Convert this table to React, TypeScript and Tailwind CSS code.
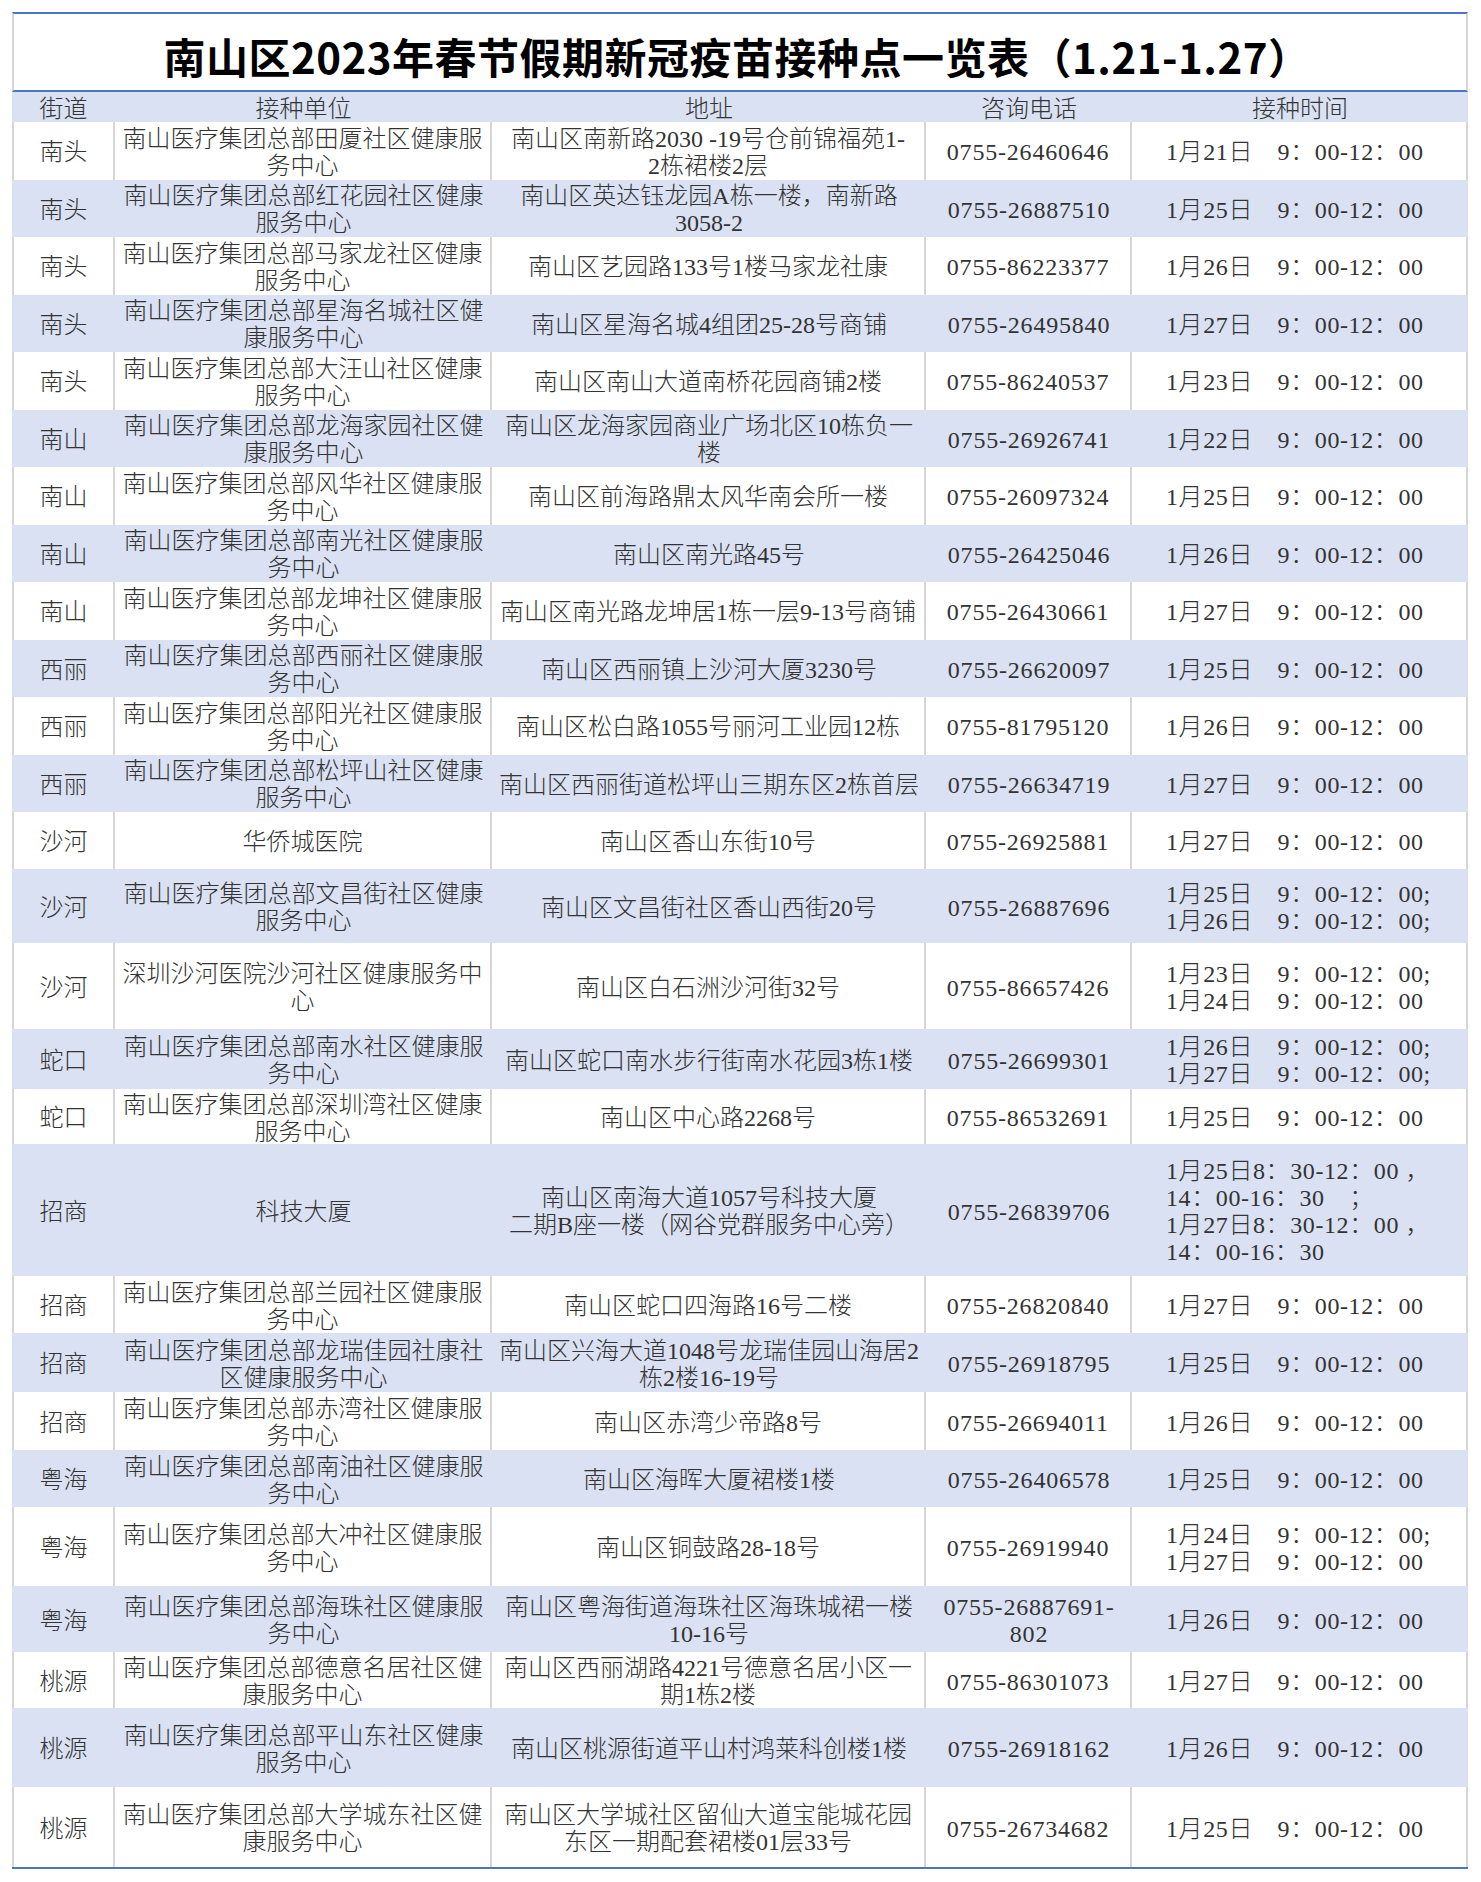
import React from "react";

type Row = {
  street: string;
  unit: string[];
  address: string[];
  phone: string[];
  time: string[];
  h: string;
};

const T = "　9：00-12：00";

const rows: Row[] = [
  { street: "南头", unit: ["南山医疗集团总部田厦社区健康服", "务中心"], address: ["南山区南新路2030 -19号仓前锦福苑1-", "2栋裙楼2层"], phone: ["0755-26460646"], time: ["1月21日" + T], h: "h-[57.5px]" },
  { street: "南头", unit: ["南山医疗集团总部红花园社区健康", "服务中心"], address: ["南山区英达钰龙园A栋一楼，南新路", "3058-2"], phone: ["0755-26887510"], time: ["1月25日" + T], h: "h-[57.5px]" },
  { street: "南头", unit: ["南山医疗集团总部马家龙社区健康", "服务中心"], address: ["南山区艺园路133号1楼马家龙社康"], phone: ["0755-86223377"], time: ["1月26日" + T], h: "h-[57.5px]" },
  { street: "南头", unit: ["南山医疗集团总部星海名城社区健", "康服务中心"], address: ["南山区星海名城4组团25-28号商铺"], phone: ["0755-26495840"], time: ["1月27日" + T], h: "h-[57.5px]" },
  { street: "南头", unit: ["南山医疗集团总部大汪山社区健康", "服务中心"], address: ["南山区南山大道南桥花园商铺2楼"], phone: ["0755-86240537"], time: ["1月23日" + T], h: "h-[57.5px]" },
  { street: "南山", unit: ["南山医疗集团总部龙海家园社区健", "康服务中心"], address: ["南山区龙海家园商业广场北区10栋负一", "楼"], phone: ["0755-26926741"], time: ["1月22日" + T], h: "h-[57.5px]" },
  { street: "南山", unit: ["南山医疗集团总部风华社区健康服", "务中心"], address: ["南山区前海路鼎太风华南会所一楼"], phone: ["0755-26097324"], time: ["1月25日" + T], h: "h-[57.5px]" },
  { street: "南山", unit: ["南山医疗集团总部南光社区健康服", "务中心"], address: ["南山区南光路45号"], phone: ["0755-26425046"], time: ["1月26日" + T], h: "h-[57.5px]" },
  { street: "南山", unit: ["南山医疗集团总部龙坤社区健康服", "务中心"], address: ["南山区南光路龙坤居1栋一层9-13号商铺"], phone: ["0755-26430661"], time: ["1月27日" + T], h: "h-[57.5px]" },
  { street: "西丽", unit: ["南山医疗集团总部西丽社区健康服", "务中心"], address: ["南山区西丽镇上沙河大厦3230号"], phone: ["0755-26620097"], time: ["1月25日" + T], h: "h-[57.5px]" },
  { street: "西丽", unit: ["南山医疗集团总部阳光社区健康服", "务中心"], address: ["南山区松白路1055号丽河工业园12栋"], phone: ["0755-81795120"], time: ["1月26日" + T], h: "h-[57.5px]" },
  { street: "西丽", unit: ["南山医疗集团总部松坪山社区健康", "服务中心"], address: ["南山区西丽街道松坪山三期东区2栋首层"], phone: ["0755-26634719"], time: ["1月27日" + T], h: "h-[57.5px]" },
  { street: "沙河", unit: ["华侨城医院"], address: ["南山区香山东街10号"], phone: ["0755-26925881"], time: ["1月27日" + T], h: "h-[57px]" },
  { street: "沙河", unit: ["南山医疗集团总部文昌街社区健康", "服务中心"], address: ["南山区文昌街社区香山西街20号"], phone: ["0755-26887696"], time: ["1月25日" + T + ";", "1月26日" + T + ";"], h: "h-[74px]" },
  { street: "沙河", unit: ["深圳沙河医院沙河社区健康服务中", "心"], address: ["南山区白石洲沙河街32号"], phone: ["0755-86657426"], time: ["1月23日" + T + ";", "1月24日" + T], h: "h-[86px]" },
  { street: "蛇口", unit: ["南山医疗集团总部南水社区健康服", "务中心"], address: ["南山区蛇口南水步行街南水花园3栋1楼"], phone: ["0755-26699301"], time: ["1月26日" + T + ";", "1月27日" + T + ";"], h: "h-[60px]" },
  { street: "蛇口", unit: ["南山医疗集团总部深圳湾社区健康", "服务中心"], address: ["南山区中心路2268号"], phone: ["0755-86532691"], time: ["1月25日" + T], h: "h-[55px]" },
  { street: "招商", unit: ["科技大厦"], address: ["南山区南海大道1057号科技大厦", "二期B座一楼（网谷党群服务中心旁）"], phone: ["0755-26839706"], time: ["1月25日8：30-12：00 ，", "14：00-16：30　；", "1月27日8：30-12：00 ，", "14：00-16：30"], h: "h-[132px]" },
  { street: "招商", unit: ["南山医疗集团总部兰园社区健康服", "务中心"], address: ["南山区蛇口四海路16号二楼"], phone: ["0755-26820840"], time: ["1月27日" + T], h: "h-[57px]" },
  { street: "招商", unit: ["南山医疗集团总部龙瑞佳园社康社", "区健康服务中心"], address: ["南山区兴海大道1048号龙瑞佳园山海居2", "栋2楼16-19号"], phone: ["0755-26918795"], time: ["1月25日" + T], h: "h-[59px]" },
  { street: "招商", unit: ["南山医疗集团总部赤湾社区健康服", "务中心"], address: ["南山区赤湾少帝路8号"], phone: ["0755-26694011"], time: ["1月26日" + T], h: "h-[58px]" },
  { street: "粤海", unit: ["南山医疗集团总部南油社区健康服", "务中心"], address: ["南山区海晖大厦裙楼1楼"], phone: ["0755-26406578"], time: ["1月25日" + T], h: "h-[57px]" },
  { street: "粤海", unit: ["南山医疗集团总部大冲社区健康服", "务中心"], address: ["南山区铜鼓路28-18号"], phone: ["0755-26919940"], time: ["1月24日" + T + ";", "1月27日" + T], h: "h-[79px]" },
  { street: "粤海", unit: ["南山医疗集团总部海珠社区健康服", "务中心"], address: ["南山区粤海街道海珠社区海珠城裙一楼", "10-16号"], phone: ["0755-26887691-", "802"], time: ["1月26日" + T], h: "h-[66px]" },
  { street: "桃源", unit: ["南山医疗集团总部德意名居社区健", "康服务中心"], address: ["南山区西丽湖路4221号德意名居小区一", "期1栋2楼"], phone: ["0755-86301073"], time: ["1月27日" + T], h: "h-[56px]" },
  { street: "桃源", unit: ["南山医疗集团总部平山东社区健康", "服务中心"], address: ["南山区桃源街道平山村鸿莱科创楼1楼"], phone: ["0755-26918162"], time: ["1月26日" + T], h: "h-[79px]" },
  { street: "桃源", unit: ["南山医疗集团总部大学城东社区健", "康服务中心"], address: ["南山区大学城社区留仙大道宝能城花园", "东区一期配套裙楼01层33号"], phone: ["0755-26734682"], time: ["1月25日" + T], h: "h-[80px]" },
];

const headers = ["街道", "接种单位", "地址", "咨询电话", "接种时间"];

function Lines({ lines }: { lines: string[] }) {
  return (
    <div className="whitespace-pre">
      {lines.map((l, i) => (
        <div key={i}>{l}</div>
      ))}
    </div>
  );
}

function TableRow({ row, shaded }: { row: Row; shaded: boolean }) {
  const line = shaded ? "" : "border-r-2 border-[#d6d6d6]";
  const cell = `flex items-center justify-center text-center pt-[4px] overflow-hidden ${line}`;
  return (
    <div
      className={`grid grid-cols-[103px_377px_434px_206px_336px] ${row.h} ${
        shaded ? "bg-[#d9e1f2]" : "bg-white"
      }`}
    >
      <div className={`${cell} ${shaded ? "" : "border-l-2"}`}>{row.street}</div>
      <div className={cell}>
        <Lines lines={row.unit} />
      </div>
      <div className={cell}>
        <Lines lines={row.address} />
      </div>
      <div className={`${cell} tracking-[0.8px]`}>
        <Lines lines={row.phone} />
      </div>
      <div
        className={`flex items-center justify-start text-left pl-[34px] pt-[4px] overflow-hidden tracking-[0.6px] ${line}`}
      >
        <Lines lines={row.time} />
      </div>
    </div>
  );
}

export default function App() {
  return (
    <div className="w-[1481px] min-h-[1882px] bg-white pt-[12px] pl-[12px]">
      <div
        className="w-[1456px] text-[24px] leading-[27px] text-[#333333] font-light"
        style={{ fontFamily: '"Liberation Serif", "Noto Sans CJK SC", sans-serif' }}
      >
        {/* Title */}
        <div className="h-[80px] flex items-center justify-center border-y-2 border-y-[#4a74c4] border-x-2 border-x-[#d6d6d6] pt-[8px] pr-[6px]">
          <h1
            className="text-[42px] leading-none font-bold text-black tracking-[0.5px]"
            style={{ fontFamily: '"Noto Sans CJK SC", sans-serif' }}
          >
            南山区2023年春节假期新冠疫苗接种点一览表（1.21-1.27）
          </h1>
        </div>

        {/* Header */}
        <div className="grid grid-cols-[103px_377px_434px_206px_336px] h-[30px] bg-[#d9e1f2]">
          {headers.map((h) => (
            <div key={h} className="flex items-center justify-center pt-[3px] leading-[24px]">
              {h}
            </div>
          ))}
        </div>

        {/* Body */}
        <div className="border-b-2 border-[#4a74c4]">
          {rows.map((r, i) => (
            <TableRow key={i} row={r} shaded={i % 2 === 1} />
          ))}
        </div>
      </div>
    </div>
  );
}
